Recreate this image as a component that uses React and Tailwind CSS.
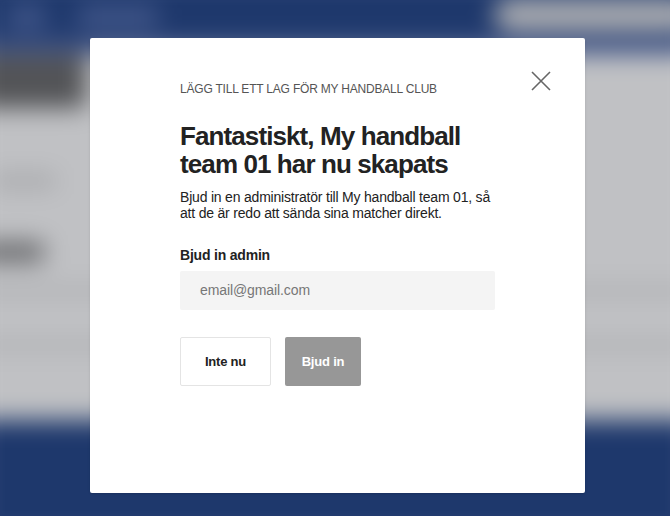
import React from 'react';

const Backdrop = () => (
    <div className="absolute -inset-6 flex flex-col blur-[12px]">
        {/* --- HEADER --- */}
        <div className="h-[64px] bg-[#1e386c] flex items-end pb-3 pl-8 gap-8 shrink-0">
            <div className="w-[38px] h-[22px] rounded bg-[#42578a]"></div>
            <div className="w-[80px] h-[22px] rounded bg-[#42578a]"></div>
            <div className="ml-auto w-[200px] h-[34px] rounded-full bg-[#aaacb1] -mb-1"></div>
        </div>
        <div className="h-[14px] bg-[#46598a] shrink-0"></div>

        {/* --- BODY --- */}
        <div className="flex-1 bg-[#c0c1c4] flex flex-col">
            <div className="h-[54px] w-[110px] bg-[#535457] rounded"></div>
            <div className="h-[66px]"></div>
            <div className="h-[14px] w-[64px] bg-[#a6a7aa] rounded ml-4"></div>
            <div className="h-[54px]"></div>
            <div className="h-[20px] w-[68px] bg-[#66676a] rounded"></div>
            <div className="h-[24px]"></div>
            <div className="h-[10px] w-full bg-[#adaeb1]"></div>
            <div className="h-[44px]"></div>
            <div className="h-[10px] w-full bg-[#adaeb1]"></div>
        </div>

        {/* --- FOOTER --- */}
        <div className="h-[120px] bg-[#1e386c] shrink-0"></div>
    </div>
);

const App = () => {
    return (
        <div className="relative w-[670px] h-[516px] overflow-hidden bg-[#c0c1c4]" style={{ fontFamily: '"Liberation Sans", Arial, sans-serif' }}>
            <Backdrop />

            {/* --- MODAL --- */}
            <div className="absolute inset-0 pt-[38px] pl-[90px]">
                <div className="relative w-[495px] h-[455px] bg-white rounded-[2px] shadow-sm px-[90px] pt-[44px]">
                    <button className="absolute top-[32px] right-[33px] w-[22px] h-[22px] text-[#666]">
                        <svg viewBox="0 0 22 22" className="w-full h-full" fill="none" stroke="currentColor" strokeWidth="1.6">
                            <path d="M2 2 L20 20 M20 2 L2 20" />
                        </svg>
                    </button>

                    <p className="text-[12px] leading-[14px] text-[#555] uppercase tracking-[-0.2px]">
                        Lägg till ett lag för My handball club
                    </p>

                    <h2 className="mt-[26px] text-[26px] leading-[28px] font-bold text-[#222] tracking-[-0.9px]">
                        Fantastiskt, My handball<br />team 01 har nu skapats
                    </h2>

                    <p className="mt-[11px] text-[14px] leading-[16px] text-[#222] tracking-[-0.2px]">
                        Bjud in en administratör till My handball team 01, så<br />att de är redo att sända sina matcher direkt.
                    </p>

                    <p className="mt-[26px] text-[14px] leading-[16px] font-bold text-[#222] tracking-[-0.2px]">
                        Bjud in admin
                    </p>

                    <div className="mt-[8px] w-[315px] h-[39px] bg-[#f4f4f4] rounded-[2px] flex items-center px-5">
                        <span className="text-[14px] text-[#777] tracking-[-0.1px]">email@gmail.com</span>
                    </div>

                    <div className="mt-[27px] flex gap-[14px]">
                        <button className="w-[91px] h-[49px] bg-white border border-[#e4e4e4] rounded-[2px] text-[13px] font-bold text-[#222] tracking-[-0.2px]">
                            Inte nu
                        </button>
                        <button className="w-[76px] h-[49px] bg-[#979797] rounded-[2px] text-[13px] font-bold text-white tracking-[-0.2px]">
                            Bjud in
                        </button>
                    </div>
                </div>
            </div>
        </div>
    );
};

export default App;
